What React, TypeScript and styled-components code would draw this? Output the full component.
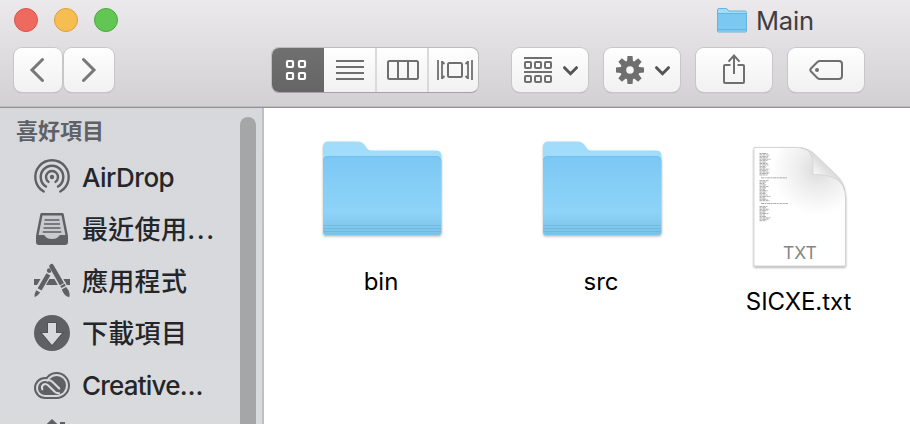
import React from "react";
import styled, { createGlobalStyle } from "styled-components";

const GlobalStyle = createGlobalStyle`
  * { box-sizing: border-box; }
  body {
    margin: 0;
    overflow: hidden;
    background: #fff;
    font-family: Inter, "Noto Sans CJK TC", sans-serif;
  }
  svg { display: block; flex: none; overflow: visible; }
`;

const Window = styled.div`
  width: 910px;
  height: 424px;
  display: flex;
  flex-direction: column;
  overflow: hidden;
  background: #fff;
`;

const Header = styled.header`
  height: 108px;
  flex: none;
  background: linear-gradient(#ebe9ec, #d2d0d3);
  border-bottom: 1px solid #949296;
  box-shadow: inset 0 -1px 0 #bdbbbe;
`;

const TitleBar = styled.div`
  height: 40px;
  padding-left: 14px;
  display: flex;
  align-items: center;
`;

const Lights = styled.div`
  display: flex;
  gap: 16px;
  margin-right: 599px;
`;

const Light = styled.span<{ $fill: string; $edge: string }>`
  width: 24px;
  height: 24px;
  border-radius: 50%;
  background: ${(p) => p.$fill};
  border: 1px solid ${(p) => p.$edge};
`;

const Title = styled.div`
  margin-left: 9px;
  padding-top: 1px;
  font-size: 25.5px;
  line-height: 40px;
  height: 40px;
  letter-spacing: -0.2px;
  color: #3f3d41;
`;

const Toolbar = styled.div`
  height: 60px;
  padding: 7px 0 0 14px;
  display: flex;
  align-items: flex-start;
`;

const Button = styled.div<{ $width: number; $left?: number; $shift?: string }>`
  width: ${(p) => p.$width}px;
  height: 44px;
  margin-top: 1px;
  margin-left: ${(p) => p.$left ?? 0}px;
  padding: ${(p) => p.$shift ?? "0"};
  display: flex;
  align-items: center;
  justify-content: center;
  border-radius: 8px;
  background: linear-gradient(#fefefe, #f1f1f1);
  box-shadow: 0 0 0 1px #c8c6c9, 0 1px 1px #a2a0a3;
`;

const ButtonWithMenu = styled(Button)`
  gap: 11px;
  padding-left: 2px;
`;

const Segments = styled.div`
  width: 208px;
  height: 46px;
  margin-left: 157px;
  display: flex;
  overflow: hidden;
  border-radius: 8px;
  border: 1px solid #bdbbbe;
  border-bottom-color: #a3a1a4;
  background: linear-gradient(#fefefe, #f1f1f1);
`;

const Segment = styled.div<{ $active?: boolean; $width: number }>`
  flex: none;
  width: ${(p) => p.$width}px;
  padding-left: ${(p) => (p.$active ? 0 : 1)}px;
  padding-right: ${(p) => (p.$active ? 3 : 0)}px;
  display: flex;
  align-items: center;
  justify-content: center;
  margin: ${(p) => (p.$active ? "-1px 0 -1px -1px" : "0")};
  background: ${(p) => (p.$active ? "linear-gradient(#707070, #656565)" : "transparent")};
  & + & + & { border-left: 2px solid #dad9db; }
`;

const Body = styled.div`
  flex: 1;
  min-height: 0;
  display: flex;
`;

const Sidebar = styled.aside`
  width: 264px;
  display: flex;
  background: linear-gradient(#d6d8dc, #d9dadc);
  border-right: 2px solid #bfc0c4;
`;

const SidebarList = styled.nav`
  width: 240px;
`;

const SectionTitle = styled.div`
  height: 43px;
  padding: 2px 0 0 16px;
  line-height: 42px;
  font-size: 22px;
  font-weight: 700;
  color: #606166;
`;

const Row = styled.div`
  height: 52px;
  padding-left: 34px;
  display: flex;
  align-items: center;
  gap: 12px;
`;

const RowLabel = styled.span<{ $spacing?: number }>`
  padding-top: 1px;
  font-size: 26px;
  font-weight: 500;
  line-height: 52px;
  height: 52px;
  white-space: nowrap;
  letter-spacing: ${(p) => p.$spacing ?? 0}px;
  color: #242629;
`;

const Ellipsis = styled.span`
  letter-spacing: 1.7px;
`;

const ScrollThumb = styled.div`
  width: 16px;
  margin-top: 9px;
  border-radius: 8px 8px 0 0;
  background: #a5a6a7;
`;

const Files = styled.main`
  flex: 1;
  padding: 31px 0 0 8px;
  display: flex;
`;

const File = styled.div<{ $width: number }>`
  width: ${(p) => p.$width}px;
  display: flex;
  flex-direction: column;
  align-items: center;
`;

const FileName = styled.div<{ $top: number; $spacing?: number }>`
  margin-top: ${(p) => p.$top}px;
  padding-right: 2px;
  font-size: 24px;
  line-height: 30px;
  letter-spacing: ${(p) => p.$spacing ?? 0}px;
  color: #000;
`;

const DocumentBox = styled.div`
  padding-top: 6px;
`;

const GRAY = "#6f6f70";
const SIDE = "#5f6064";
const PALE = "#d7d9dc";

const BackIcon = () => (
  <svg width="16" height="26" viewBox="0 0 16 26" fill="none" stroke="#787878" strokeWidth="3" strokeLinecap="round">
    <path d="M13.5 2.5 3 13l10.5 10.5" />
  </svg>
);
const ForwardIcon = () => (
  <svg width="16" height="26" viewBox="0 0 16 26" fill="none" stroke="#787878" strokeWidth="3" strokeLinecap="round">
    <path d="M2.5 2.5 13 13 2.5 23.5" />
  </svg>
);
const GridIcon = () => (
  <svg width="20" height="20" viewBox="0 0 20 20" fill="none" stroke="#fff" strokeWidth="2.2">
    {[1, 13].map((x) =>
      [1, 13].map((y) => <rect key={`${x}-${y}`} x={x} y={y} width="6" height="6" rx="1" />)
    )}
  </svg>
);
const ListIcon = () => (
  <svg width="28" height="20" viewBox="0 0 28 20" stroke={GRAY} strokeWidth="2">
    <path d="M0 1h28M0 7h28M0 13h28M0 19h28" />
  </svg>
);
const ColumnsIcon = () => (
  <svg width="32" height="20" viewBox="0 0 32 20" fill="none" stroke={GRAY} strokeWidth="2">
    <rect x="1" y="1" width="30" height="18" rx="1.5" />
    <path d="M11 1v18M21 1v18" />
  </svg>
);
const CoverFlowIcon = () => (
  <svg width="36" height="20" viewBox="0 0 36 20" fill="none" stroke={GRAY} strokeWidth="1.8">
    <path d="M1 0v20M35 0v20M5 1v18M31 1v18" />
    <path d="M5 1.5 7.5 4M5 18.5 7.5 16M31 1.5 28.5 4M31 18.5 28.5 16" />
    <rect x="11" y="3" width="14" height="14" rx="1.5" strokeWidth="2" />
  </svg>
);
const Chevron = () => (
  <svg width="15" height="9" viewBox="0 0 15 9" fill="none" stroke="#555" strokeWidth="3" strokeLinecap="round">
    <path d="m1.5 1.7 6 6 6-6" />
  </svg>
);
const ArrangeIcon = () => (
  <svg width="28" height="26" viewBox="0 0 28 26" fill="none" stroke={GRAY} strokeWidth="2">
    <path d="M0 1h28M0 15h28" />
    {[1, 11, 21].map((x) =>
      [5, 19].map((y) => <rect key={`${x}-${y}`} x={x} y={y} width="6" height="6" rx="1" />)
    )}
  </svg>
);
const GearIcon = () => (
  <svg width="28" height="28" viewBox="-14 -14 28 28" fill={GRAY}>
    {[0, 45, 90, 135, 180, 225, 270, 315].map((a) => (
      <path key={a} d="M-3.2 -7 -2.5 -14h5L3.2 -7z" transform={`rotate(${a})`} />
    ))}
    <circle r="6.7" fill="none" stroke={GRAY} strokeWidth="5.8" />
  </svg>
);
const ShareIcon = () => (
  <svg width="22" height="30" viewBox="0 0 22 30" fill="none" stroke={GRAY} strokeWidth="2">
    <path d="M7.5 11H2a1 1 0 0 0-1 1v16a1 1 0 0 0 1 1h18a1 1 0 0 0 1-1V12a1 1 0 0 0-1-1h-5.500" />
    <path d="M11 20V2M5.500 7.700 11 1.600l5.500 6.100" />
  </svg>
);
const TagIcon = () => (
  <svg width="34" height="20" viewBox="0 0 34 20">
    <path
      d="M11 1h19a3 3 0 0 1 3 3v12a3 3 0 0 1-3 3H11Q9.500 19 8.400 18L2 11.500Q.6 10 2 8.500L8.400 2Q9.500 1 11 1z"
      fill="none"
      stroke={GRAY}
      strokeWidth="2"
    />
    <circle cx="8" cy="10" r="2" fill={GRAY} />
  </svg>
);

const AirDropIcon = () => (
  <svg width="36" height="36" viewBox="-18 -18 36 36" fill="none" stroke={SIDE} strokeWidth="2.4" strokeLinecap="round">
    <path d="M-8.300 14.500A16.700 16.700 0 1 1 8.300 14.500" />
    <path d="M-6 9.600A11.300 11.300 0 1 1 6 9.600" />
    <path d="M-3.500 4.900A6 6 0 1 1 3.500 4.900" />
    <circle r="2.2" fill={SIDE} stroke="none" />
  </svg>
);
const RecentIcon = () => (
  <svg width="36" height="36" viewBox="0 0 36 36">
    <path d="M7.500 3.200h21L32.800 25v6q0 1.800-1.800 1.800H5q-1.800 0-1.800-1.800v-6z" fill="#c9cacf" stroke={SIDE} strokeWidth="2.4" strokeLinejoin="round" />
    <path d="M3 24h7c1 0 1.500 4 8 4s7-4 8-4h7v7q0 2-2 2H5q-2 0-2-2z" fill={SIDE} />
    <path d="M10.500 9h15M10 13h16M9.500 17h17M8.700 21h18.600" stroke={SIDE} strokeWidth="1.7" />
  </svg>
);
const AppsIcon = () => (
  <svg width="36" height="36" viewBox="0 0 36 36" fill={SIDE}>
    <path d="M0 16h36v6H0z" />
    <path d="M15 9 5.500 25.500M18 4 30.500 26" stroke={PALE} strokeWidth="7.6" fill="none" />
    <path d="M14.400 11.400 5.600 26.300" stroke={SIDE} strokeWidth="4.500" />
    <circle cx="15.200" cy="7.600" r="2.300" />
    <path d="M2.300 27.300l3.800 2.200Q4 33 .6 34.300 0 31 2.300 27.300z" />
    <path d="M18 2.900 29 22.400" stroke={PALE} strokeWidth="6.400" strokeLinecap="round" />
    <path d="M17.600 3.300 27.800 21" stroke={SIDE} strokeWidth="4.700" strokeLinecap="round" />
    <path d="m26 22.500 4.200-2.400 1.500 2.600-4.200 2.400z" />
    <path d="m25.300 23.200 6.200-3.600" stroke={PALE} strokeWidth="1" />
    <path d="m27.800 26.400 4.200-2.400Q36.800 29 35.200 34.200 30 33 27.800 26.400z" />
  </svg>
);
const DownloadIcon = () => (
  <svg width="36" height="36" viewBox="0 0 36 36">
    <circle cx="18" cy="18" r="18" fill={SIDE} />
    <path d="M14 8h8v10h6L18 30 8 18h6z" fill="#d8d9dd" stroke="#515257" strokeWidth="2" paintOrder="stroke" />
  </svg>
);
const CloudIcon = () => (
  <svg width="36" height="36" viewBox="0 0 36 36">
    {[
      { inset: 0, color: SIDE },
      { inset: 2, color: PALE },
      { inset: 4, color: SIDE },
    ].map(({ inset, color }) => (
      <g key={inset} fill={color}>
        <circle cx="11" cy="21" r={11 - inset} />
        <circle cx="22.600" cy="18.500" r={13.400 - inset} />
        <path d={`M11 21h11.500v${11 - inset}H11z`} />
      </g>
    ))}
    <g fill="none" stroke={PALE} strokeWidth="2.1" strokeLinecap="round">
      <path d="M8.300 22.300C6.800 18.300 10.800 15.300 14 18.300L20.500 24.600Q22 26.200 25 26.200" />
      <path d="M13.300 13.200Q16.300 12.800 18.300 14.800L25.300 21.600" />
    </g>
  </svg>
);
const HomeIcon = () => (
  <svg width="36" height="36" viewBox="0 0 36 36" fill={SIDE}>
    <path d="M18 0 36 17h-5v17H5V17H0zM26 3h5v10h-5z" />
  </svg>
);

const FolderIcon = () => (
  <svg width="120" height="98" viewBox="0 0 120 98">
    <defs>
      <linearGradient id="folderFront" x1="0" y1="0" x2="0" y2="1">
        <stop offset="0" stopColor="#7bc8f4" />
        <stop offset=".7" stopColor="#8ed3f8" />
        <stop offset=".86" stopColor="#84caef" />
        <stop offset="1" stopColor="#7ac2e8" />
      </linearGradient>
      <filter id="folderShadow" x="-5%" y="-5%" width="110%" height="112%">
        <feDropShadow dx="0" dy="1.5" stdDeviation="1" floodOpacity=".28" />
      </filter>
    </defs>
    <g filter="url(#folderShadow)">
      <path d="M1 8q0-5.500 5-5.500h30q4 0 6.500 3.500l2.500 3.500q1.500 2 4 2h65q5 0 5.500 5v76.500q0 3-3 3H4q-3 0-3-3z" fill="#a1dcfa" />
      <path d="M1 22q0-5 5-5h108q5 0 5.500 5v71q0 3-3 3H4q-3 0-3-3z" fill="url(#folderFront)" />
    </g>
    <path d="M1.500 86.500h117.500M1.500 89.500h117.500M1.500 92.500h117.500" stroke="#65acd3" strokeWidth="1" opacity=".5" />
    <path d="M1.500 21q.5-3.500 4.500-3.500h108q4 0 4.500 3.500" fill="none" stroke="#6fbce9" strokeWidth=".7" />
  </svg>
);
const SmallFolderIcon = () => (
  <svg width="30" height="26" viewBox="0 0 30 26">
    <path d="M.5 3q0-1.500 1.500-1.500h7Q10 1.500 11 3l.7 1H28q1.500 0 1.500 1.500v18.500q0 1-1 1h-27q-1 0-1-1z" fill="#a1dcf8" stroke="#69b3dc" />
    <path d="M1 7h28v17H1z" fill="#7bc9f3" />
    <path d="M.5 6.500h29M.5 22.500h29" stroke="#65b5df" />
  </svg>
);

const inkLines = [
  8, 10, 9, 8, 11, 8, 7, 8, 9, 7, 6, 10, 8, 10, 9, 8, 0, 26, 0, 9, 7, 5, 7, 9, 7, 6, 8, 7, 6, 8, 11, 6, 8, 10, 0, 27, 0, 8, 7, 10, 8, 6, 9, 6, 7, 11, 9, 7,
];
const DocumentIcon = () => (
  <svg width="96" height="124" viewBox="0 0 96 124">
    <defs>
      <radialGradient id="pageShade" gradientUnits="userSpaceOnUse" cx="66" cy="24" r="46">
        <stop offset="0" stopColor="#dadada" />
        <stop offset=".4" stopColor="#ececec" />
        <stop offset="1" stopColor="#fff" />
      </radialGradient>
      <linearGradient id="curl" x1="0" y1="1" x2=".55" y2=".45">
        <stop offset="0" stopColor="#fff" />
        <stop offset=".6" stopColor="#fafafa" />
        <stop offset="1" stopColor="#dedede" />
      </linearGradient>
      <filter id="pageShadow" x="-5%" y="-5%" width="110%" height="110%">
        <feDropShadow dx="0" dy="1.2" stdDeviation="1" floodOpacity=".38" />
      </filter>
    </defs>
    <path
      d="M2 2.500h42Q54 2.500 61 8L85 31Q93 39 93.500 52v69H2z"
      fill="url(#pageShade)"
      stroke="#c0c0c0"
      strokeWidth=".6"
      filter="url(#pageShadow)"
    />
    <path d="M49 2.800C60 4.500 61.500 14 61 29.500 74 29 89.500 32 92.800 46 91 38 88.500 34.500 84 30L63 9.800Q57 4 49 2.800z" fill="url(#curl)" stroke="#cdcdcd" strokeWidth=".6" />
    {inkLines.map((w, i) =>
      w ? (
        <path
          key={i}
          d={`M${w > 20 ? 9 : 7.500} ${8.500 + i * 1.430}h${w}`}
          stroke="#555"
          strokeWidth=".7"
          strokeDasharray={i % 2 ? "3 .5 2 .6" : "2 .6 4 .5"}
          opacity=".7"
        />
      ) : null
    )}
    <text x="48" y="114" textAnchor="middle" fontFamily="Inter" fontSize="17.500" fill="#858585">
      TXT
    </text>
  </svg>
);

const places = [
  { label: "AirDrop", Icon: AirDropIcon, spacing: -0.5 },
  { label: "最近使用", more: true, Icon: RecentIcon, spacing: 0.3 },
  { label: "應用程式", Icon: AppsIcon, spacing: 0.3 },
  { label: "下載項目", Icon: DownloadIcon, spacing: 0.3 },
  { label: "Creative…", Icon: CloudIcon, spacing: -0.8 },
  { label: "", Icon: HomeIcon },
];

export default function App() {
  return (
    <Window>
      <GlobalStyle />
      <Header>
        <TitleBar>
          <Lights>
            <Light $fill="#ee6a5f" $edge="#d95449" />
            <Light $fill="#f6be50" $edge="#dba03c" />
            <Light $fill="#61c654" $edge="#48a93f" />
          </Lights>
          <SmallFolderIcon />
          <Title>Main</Title>
        </TitleBar>
        <Toolbar>
          <Button $width={48} $shift="0 3px 0 0"><BackIcon /></Button>
          <Button $width={50} $left={2}><ForwardIcon /></Button>
          <Segments>
            <Segment $active $width={53}><GridIcon /></Segment>
            <Segment $width={51}><ListIcon /></Segment>
            <Segment $width={52}><ColumnsIcon /></Segment>
            <Segment $width={52}><CoverFlowIcon /></Segment>
          </Segments>
          <ButtonWithMenu $width={76} $left={33}><ArrangeIcon /><Chevron /></ButtonWithMenu>
          <ButtonWithMenu $width={76} $left={16}><GearIcon /><Chevron /></ButtonWithMenu>
          <Button $width={76} $left={16} $shift="0 0 2px"><ShareIcon /></Button>
          <Button $width={76} $left={16}><TagIcon /></Button>
        </Toolbar>
      </Header>
      <Body>
        <Sidebar>
          <SidebarList>
            <SectionTitle>喜好項目</SectionTitle>
            {places.map(({ label, more, Icon, spacing }, i) => (
              <Row key={i}>
                <Icon />
                <RowLabel $spacing={spacing}>
                  {label}
                  {more && <Ellipsis>...</Ellipsis>}
                </RowLabel>
              </Row>
            ))}
          </SidebarList>
          <ScrollThumb />
        </Sidebar>
        <Files>
          <File $width={220}>
            <FolderIcon />
            <FileName $top={30}>bin</FileName>
          </File>
          <File $width={220}>
            <FolderIcon />
            <FileName $top={30}>src</FileName>
          </File>
          <File $width={175}>
            <DocumentBox><DocumentIcon /></DocumentBox>
            <FileName $top={18} $spacing={-0.1}>SICXE.txt</FileName>
          </File>
        </Files>
      </Body>
    </Window>
  );
}
